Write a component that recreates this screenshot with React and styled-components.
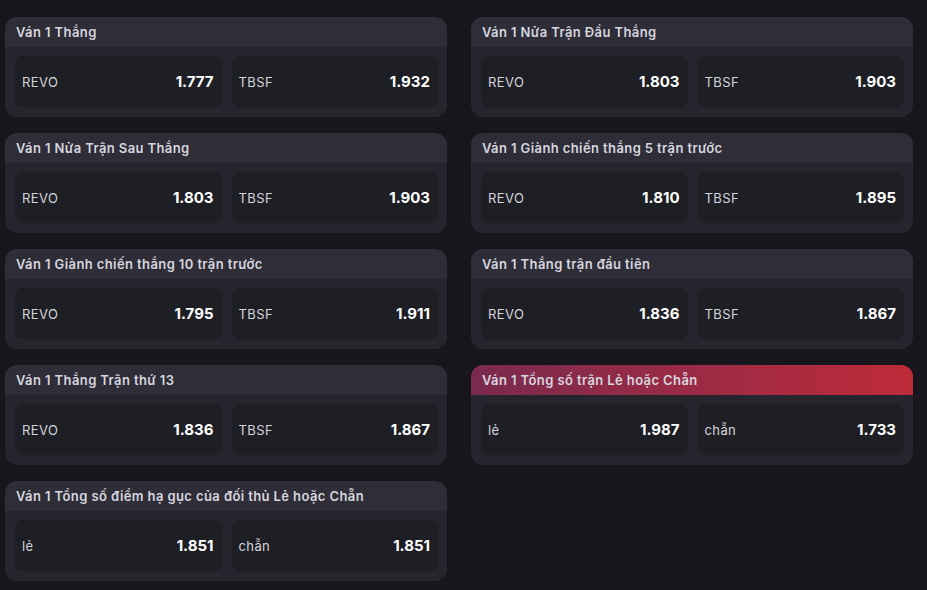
import styled, { createGlobalStyle } from "styled-components";

const Global = createGlobalStyle`
  html, body {
    margin: 0;
    padding: 0;
    background: #17161c;
  }
  body {
    font-family: Inter, "Noto Sans", sans-serif;
  }
`;

const Page = styled.div`
  width: 927px;
  height: 590px;
  box-sizing: border-box;
  padding: 17px 14px 0 5px;
  display: grid;
  grid-template-columns: 442px 442px;
  column-gap: 24px;
  row-gap: 16px;
  align-content: start;
  overflow: hidden;
`;

const Card = styled.div`
  height: 100px;
  border-radius: 12px;
  overflow: hidden;
  background: #26252e;
  display: flex;
  flex-direction: column;
`;

const Header = styled.div`
  height: 30px;
  flex: none;
  display: flex;
  align-items: center;
  padding: 0 11px;
  background: ${(p) =>
    p.$active
      ? "linear-gradient(90deg, #7a2a4e 0%, #a22b43 60%, #bf2a38 100%)"
      : "#2e2d38"};
  color: #d6d6de;
  font-size: 13px;
  font-weight: 600;
  letter-spacing: 0.4px;
`;

const Body = styled.div`
  flex: 1;
  display: grid;
  grid-template-columns: 1fr 1fr;
  gap: 10px;
  padding: 9px 9px 10px 10px;
`;

const Option = styled.div`
  background: #1e1e25;
  border-radius: 8px;
  display: flex;
  align-items: center;
  justify-content: space-between;
  padding: 0 8px 0 7px;
`;

const Label = styled.span`
  color: #d4d4dc;
  font-size: 13px;
  font-weight: 400;
  letter-spacing: 0.4px;
`;

const Odds = styled.span`
  color: #ffffff;
  font-size: 15px;
  font-weight: 700;
`;

const markets = [
  { title: "Ván 1 Thắng", opts: [["REVO", "1.777"], ["TBSF", "1.932"]] },
  { title: "Ván 1 Nửa Trận Đầu Thắng", opts: [["REVO", "1.803"], ["TBSF", "1.903"]] },
  { title: "Ván 1 Nửa Trận Sau Thắng", opts: [["REVO", "1.803"], ["TBSF", "1.903"]] },
  { title: "Ván 1 Giành chiến thắng 5 trận trước", opts: [["REVO", "1.810"], ["TBSF", "1.895"]] },
  { title: "Ván 1 Giành chiến thắng 10 trận trước", opts: [["REVO", "1.795"], ["TBSF", "1.911"]] },
  { title: "Ván 1 Thắng trận đầu tiên", opts: [["REVO", "1.836"], ["TBSF", "1.867"]] },
  { title: "Ván 1 Thắng Trận thứ 13", opts: [["REVO", "1.836"], ["TBSF", "1.867"]] },
  { title: "Ván 1 Tổng số trận Lẻ hoặc Chẵn", active: true, opts: [["lẻ", "1.987"], ["chẵn", "1.733"]] },
  { title: "Ván 1 Tổng số điểm hạ gục của đối thủ Lẻ hoặc Chẵn", opts: [["lẻ", "1.851"], ["chẵn", "1.851"]] },
];

export default function App() {
  return (
    <>
      <Global />
      <Page>
        {markets.map((m) => (
          <Card key={m.title}>
            <Header $active={m.active}>{m.title}</Header>
            <Body>
              {m.opts.map(([label, odds]) => (
                <Option key={label}>
                  <Label>{label}</Label>
                  <Odds>{odds}</Odds>
                </Option>
              ))}
            </Body>
          </Card>
        ))}
      </Page>
    </>
  );
}
